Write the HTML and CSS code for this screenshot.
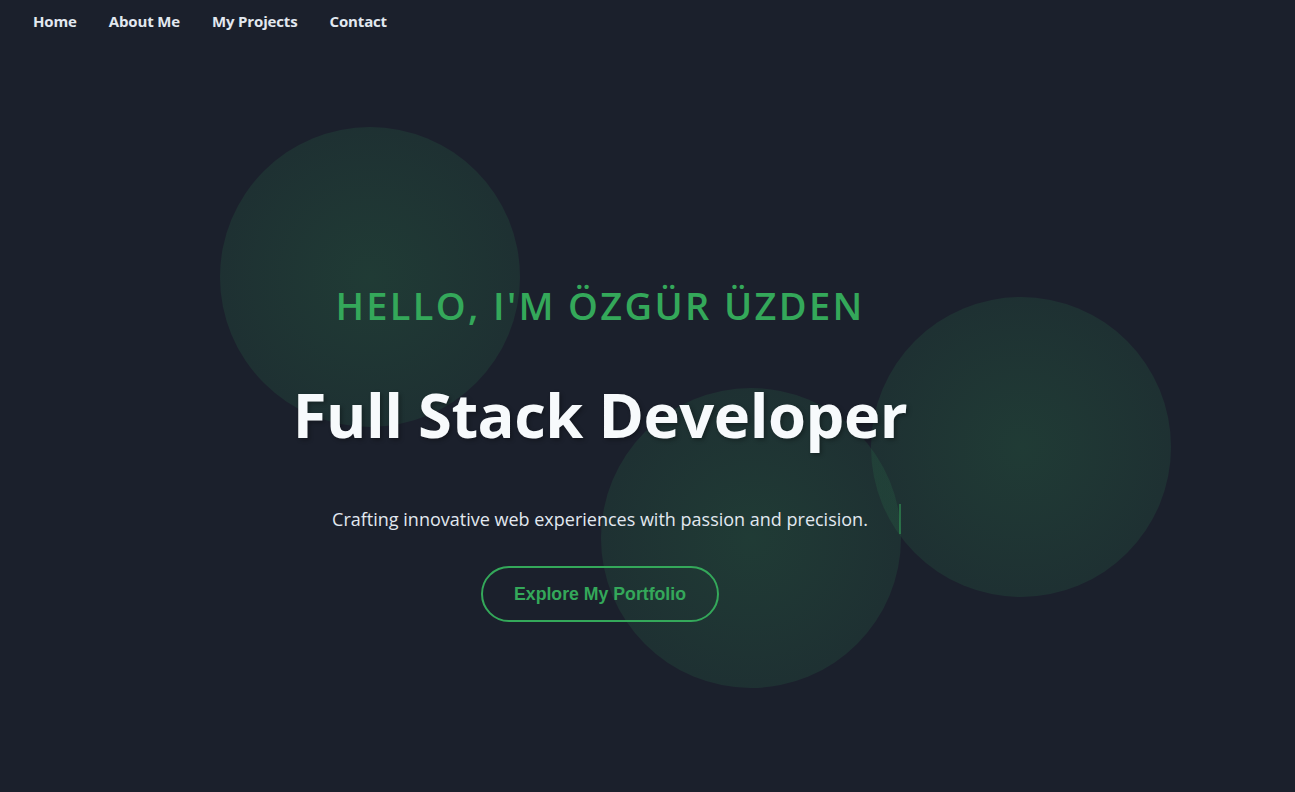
FILE: index.html
```html
<!DOCTYPE html>
<html lang="en">
<head>
<meta charset="utf-8">
<title>Özgür Üzden</title>
<link rel="stylesheet" href="styles.css">
</head>
<body>
<nav class="nav">
  <a class="nav-link" href="#">Home</a>
  <a class="nav-link" href="#">About Me</a>
  <a class="nav-link" href="#">My Projects</a>
  <a class="nav-link" href="#">Contact</a>
</nav>
<main class="hero">
  <div class="blob blob-a"></div>
  <div class="blob blob-b"></div>
  <div class="blob blob-c"></div>
  <div class="hero-content">
    <h2 class="hello">HELLO, I'M ÖZGÜR ÜZDEN</h2>
    <h1 class="title">Full Stack Developer</h1>
    <p class="subtitle"><span class="typed">Crafting innovative web experiences with passion and precision.<span class="cursor"></span></span></p>
    <a class="cta" href="#">Explore My Portfolio</a>
  </div>
</main>
</body>
</html>
```
FILE: styles.css
```css
html, body {
  margin: 0;
  padding: 0;
}
body {
  background: #1b202c;
  font-family: "Open Sans", "Noto Sans", sans-serif;
  color: #e2e8f0;
  width: 1295px;
  height: 792px;
  overflow: hidden;
  position: relative;
}
.nav {
  display: flex;
  gap: 32px;
  padding: 10px 33px;
  height: 22px;
  align-items: center;
}
.nav-link {
  color: #e2e8f0;
  text-decoration: none;
  font-weight: 700;
  font-size: 15px;
  letter-spacing: -0.15px;
}
.hero {
  width: 1200px;
  height: 750px;
}
.blob {
  position: absolute;
  width: 300px;
  height: 300px;
  border-radius: 50%;
  background: radial-gradient(circle, rgba(52, 168, 90, 0.2) 0%, rgba(52, 168, 100, 0.09) 100%);
}
.blob-a { left: 220px; top: 127px; }
.blob-b { left: 871px; top: 297px; }
.blob-c { left: 601px; top: 388px; }
.hero-content {
  position: relative;
  display: flex;
  flex-direction: column;
  align-items: center;
  padding-top: 238px;
}
.hello {
  margin: 0;
  color: #34a85a;
  font-weight: 600;
  font-size: 38px;
  letter-spacing: 2.35px;
  line-height: 50px;
}
.title {
  margin: 44px 0 0;
  color: #f7fafc;
  font-weight: 700;
  font-size: 61.5px;
  line-height: 80px;
  letter-spacing: -0.5px;
  text-shadow: 2px 2px 4px rgba(0, 0, 0, 0.3);
}
.subtitle {
  margin: 50px 0 0;
  font-size: 18px;
  line-height: 30px;
  color: #e2e8f0;
}
.typed {
  position: relative;
  display: inline-block;
}
.cursor {
  position: absolute;
  right: -33px;
  top: 0;
  width: 2px;
  height: 30px;
  background: rgba(52, 168, 90, 0.5);
}
.cta {
  box-sizing: border-box;
  margin-top: 32px;
  display: flex;
  align-items: center;
  justify-content: center;
  width: 238px;
  height: 56px;
  border: 2px solid #34a85a;
  border-radius: 28px;
  color: #34a85a;
  text-decoration: none;
  font-family: "Liberation Sans", Arial, sans-serif;
  font-weight: 700;
  font-size: 17.7px;
}
```
